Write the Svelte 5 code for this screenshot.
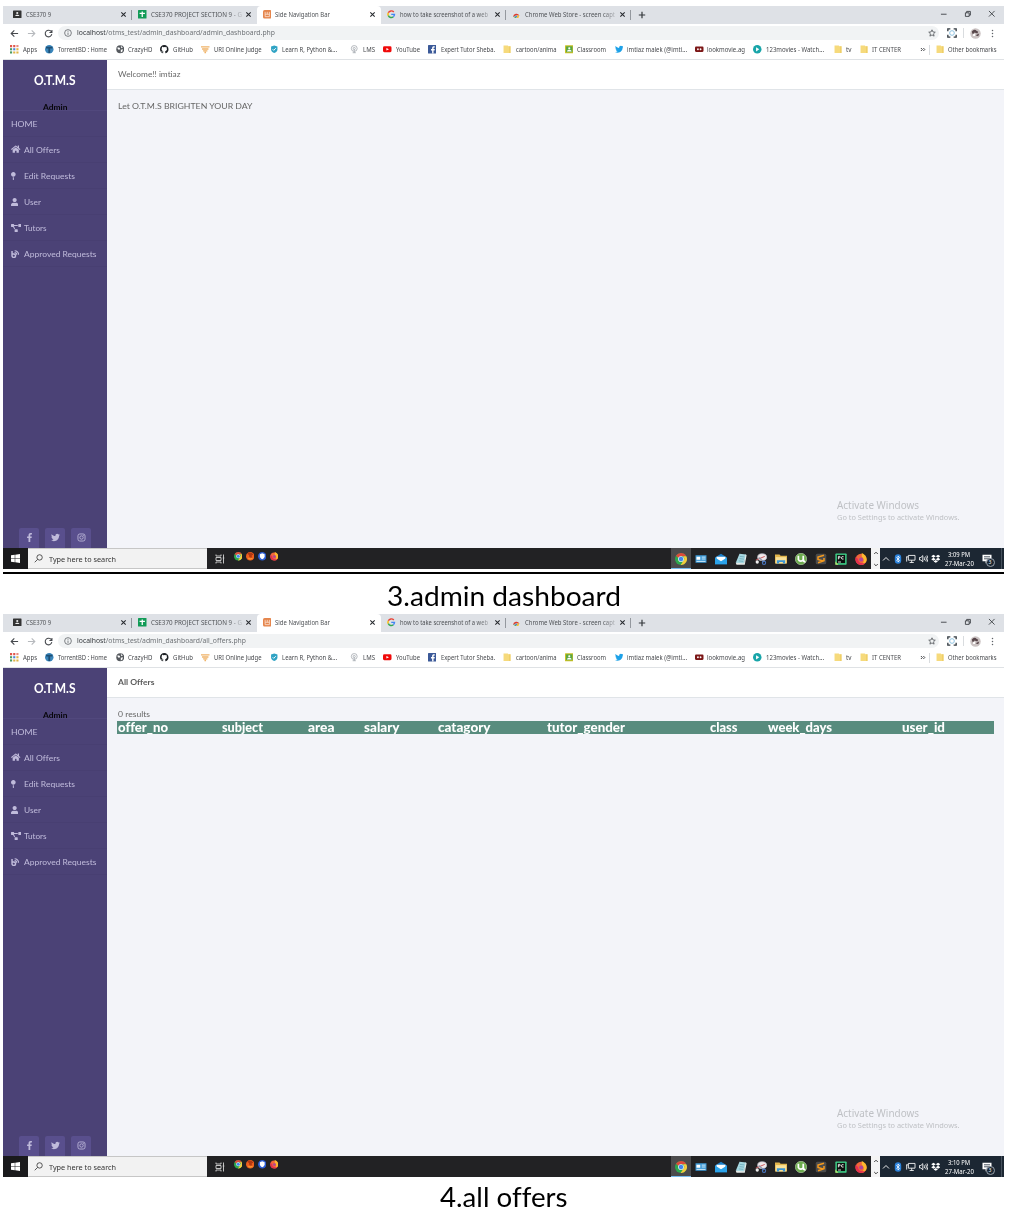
<script>
  // Scales a label horizontally so that it fills the given width.
  function fit(node, width) {
    const exact = node.getBoundingClientRect().width || width;
    node.style.transform = `scaleX(${width / exact})`;
  }

  const tabs = [
    { icon: 'gclass', label: 'CSE370 9', w: 129, pad: 10, tw: 25, sep: true },
    { icon: 'sheets', label: 'CSE370 PROJECT SECTION 9 - G', w: 125, pad: 6, tw: 91, fade: true },
    { icon: 'xampp', label: 'Side Navigation Bar', w: 124, pad: 5.5, tw: 55, active: true },
    { icon: 'google', label: 'how to take screenshot of a web', w: 125, pad: 6, tw: 88, fade: true, sep: true },
    { icon: 'store', label: 'Chrome Web Store - screen capt', w: 125, pad: 6, tw: 90, fade: true, sep: true }
  ];

  // icon, left edge, label left edge, label width, label
  const raw = [
    ['apps', 10, 23, 14, 'Apps'],
    ['torrent', 45, 58, 49, 'TorrentBD : Home'],
    ['globe', 115.5, 128, 24.5, 'CrazyHD'],
    ['github', 160, 173, 20, 'GitHub'],
    ['uri', 201, 214, 47.5, 'URI Online Judge'],
    ['shield', 270, 282, 55, 'Learn R, Python &...'],
    ['lms', 350, 363, 12, 'LMS'],
    ['youtube', 383, 396, 24, 'YouTube'],
    ['facebook', 427.5, 440.5, 54, 'Expert Tutor Sheba.'],
    ['folder', 503, 515.5, 40.5, 'cartoon/anima'],
    ['classroom', 564.5, 577, 29, 'Classroom'],
    ['twitter', 614.5, 627, 60, 'imtiaz malek (@imti...'],
    ['look', 695, 707, 38, 'lookmovie.ag'],
    ['play', 753, 766, 58, '123movies - Watch...'],
    ['folder', 834, 846, 5.5, 'tv'],
    ['folder', 860, 872, 29, 'IT CENTER']
  ];
  const bookmarks = raw.map(([icon, x, tx, tw, label], i) => ({
    icon, label, tw, iw: tx - x, w: (raw[i + 1] ? raw[i + 1][1] : 920) - x
  }));

  const menu = [
    { icon: '', label: 'HOME', w: 26.5 },
    { icon: 'home', label: 'All Offers', w: 36 },
    { icon: 'pin', label: 'Edit Requests', w: 51 },
    { icon: 'user', label: 'User', w: 17 },
    { icon: 'diagram', label: 'Tutors', w: 22.5 },
    { icon: 'blog', label: 'Approved Requests', w: 72.5 }
  ];

  const columns = [
    { label: 'offer_no', tw: 50, w: 104.5 },
    { label: 'subject', tw: 41, w: 86 },
    { label: 'area', tw: 26.5, w: 56 },
    { label: 'salary', tw: 35.5, w: 74 },
    { label: 'catagory', tw: 52.5, w: 109 },
    { label: 'tutor_gender', tw: 78, w: 162.5 },
    { label: 'class', tw: 27.5, w: 58 },
    { label: 'week_days', tw: 64, w: 134.5 },
    { label: 'user_id', tw: 43, w: 91 }
  ];

  const pinned = ['chrome', 'panel', 'mail', 'note', 'snip', 'explorer', 'utorrent', 'sublime', 'pycharm', 'firefox'];
  const twitterPath =
    'M459.37 151.716c.325 4.548.325 9.097.325 13.645 0 138.72-105.583 298.558-298.558 298.558-59.452 0-114.68-17.219-161.137-47.106 8.447.974 16.568 1.299 25.34 1.299 49.055 0 94.213-16.568 130.274-44.832-46.132-.975-84.792-31.188-98.112-72.772 6.498.974 12.995 1.624 19.818 1.624 9.421 0 18.843-1.3 27.614-3.573-48.081-9.747-84.143-51.98-84.143-102.985v-1.299c13.969 7.797 30.214 12.67 47.431 13.319-28.264-18.843-46.781-51.005-46.781-87.391 0-19.492 5.197-37.36 14.294-52.954 51.655 63.675 129.3 105.258 216.365 109.807-1.624-7.797-2.599-15.918-2.599-24.04 0-57.828 46.782-104.934 104.934-104.934 30.213 0 57.502 12.67 76.67 33.137 23.715-4.548 46.456-13.32 66.599-25.34-7.798 24.366-24.366 44.833-46.132 57.827 21.117-2.273 41.584-8.122 60.426-16.243-14.292 20.791-32.161 39.308-52.628 54.253z';
  const facebookPath =
    'M279.14 288l14.22-92.66h-88.91v-60.13c0-25.35 12.42-50.06 52.24-50.06h40.42V6.26S260.43 0 225.36 0c-73.22 0-121.08 44.38-121.08 124.72v70.62H22.89V288h81.39v224h100.17V288z';
</script>

{#snippet text(label, w, cls = '')}
  <span class="fit {cls}" style:width="{w}px"><span class="run" use:fit={w}>{label}</span></span>
{/snippet}

{#snippet icon(name, cls = '')}
  {#if name === 'home'}
    <svg class={cls} viewBox="0 0 576 512"><path fill="currentColor" d="M280.37 148.26L96 300.11V464a16 16 0 0 0 16 16l112.06-.29a16 16 0 0 0 15.92-16V368a16 16 0 0 1 16-16h64a16 16 0 0 1 16 16v95.64a16 16 0 0 0 16 16.05L464 480a16 16 0 0 0 16-16V300L295.67 148.26a12.19 12.19 0 0 0-15.3 0zM571.6 251.47L488 182.56V44.05a12 12 0 0 0-12-12h-56a12 12 0 0 0-12 12v72.61L318.47 43a48 48 0 0 0-61 0L4.34 251.47a12 12 0 0 0-1.6 16.9l25.5 31A12 12 0 0 0 45.15 301l235.22-193.74a12.19 12.19 0 0 1 15.3 0L530.9 301a12 12 0 0 0 16.9-1.6l25.5-31a12 12 0 0 0-1.7-16.93z" /></svg>
  {:else if name === 'pin'}
    <svg class={cls} viewBox="0 0 288 512"><path fill="currentColor" d="M112 316.94v156.69l22.02 33.02c4.75 7.12 15.22 7.12 19.97 0L176 473.63V316.94c-10.39 1.92-21.06 3.06-32 3.06s-21.61-1.14-32-3.06zM144 0C64.47 0 0 64.47 0 144s64.47 144 144 144 144-64.47 144-144S223.53 0 144 0z" /></svg>
  {:else if name === 'user'}
    <svg class={cls} viewBox="0 0 448 512"><path fill="currentColor" d="M224 256c70.7 0 128-57.3 128-128S294.7 0 224 0 96 57.3 96 128s57.3 128 128 128zm89.6 32h-16.7c-22.2 10.2-46.9 16-72.9 16s-50.6-5.8-72.9-16h-16.7C60.2 288 0 348.2 0 422.4V464c0 26.5 21.5 48 48 48h352c26.5 0 48-21.5 48-48v-41.6c0-74.2-60.2-134.4-134.4-134.4z" /></svg>
  {:else if name === 'diagram'}
    <svg class={cls} viewBox="0 0 640 512"><path fill="currentColor" d="M384 320H256c-17.67 0-32 14.33-32 32v128c0 17.67 14.33 32 32 32h128c17.67 0 32-14.33 32-32V352c0-17.67-14.33-32-32-32zM192 32c0-17.67-14.33-32-32-32H32C14.33 0 0 14.33 0 32v128c0 17.67 14.33 32 32 32h95.72l73.16 128.04C211.98 300.98 232.4 288 256 288h.28L192 175.51V128h224V64H192V32zM608 0H480c-17.67 0-32 14.33-32 32v128c0 17.67 14.33 32 32 32h128c17.67 0 32-14.33 32-32V32c0-17.67-14.33-32-32-32z" /></svg>
  {:else if name === 'blog'}
    <svg class={cls} viewBox="0 0 16 16" fill="none" stroke="currentColor"><path d="M2 2v9a3.400 3.400 0 1 0 3.400-3.400H3" stroke-width="2.800" /><path d="M7 1.500a7.600 7.600 0 0 1 7.600 7.600M7 5a4 4 0 0 1 4 4" stroke-width="2.200" /></svg>
  {:else if name === 'fb'}
    <svg class={cls} viewBox="0 0 320 512"><path fill="currentColor" d={facebookPath} /></svg>
  {:else if name === 'tw'}
    <svg class={cls} viewBox="0 0 512 512"><path fill="currentColor" d={twitterPath} /></svg>
  {:else if name === 'ig'}
    <svg class={cls} viewBox="0 0 16 16" fill="none" stroke="currentColor" stroke-width="1.5"><rect x="1.7" y="1.7" width="12.6" height="12.6" rx="3.4" /><circle cx="8" cy="8" r="3" /><circle cx="11.8" cy="4.2" r=".4" /></svg>
  {:else if name === 'gclass'}
    <svg class={cls} viewBox="0 0 16 16"><rect y="1" width="16" height="14" rx="1" fill="#333" /><circle cx="8" cy="5.7" r="2" fill="#eee" /><path d="M4 11.5c.5-3.5 7.500-3.500 8 0z" fill="#eee" /></svg>
  {:else if name === 'classroom'}
    <svg class={cls} viewBox="0 0 16 16"><rect y="0.500" width="16" height="15" rx="1" fill="#c9c026" /><rect x="2" y="2.500" width="12" height="11" fill="#5aa644" /><circle cx="8" cy="6" r="2" fill="#fff" /><path d="M3.500 12c.5-4 8.500-4 9 0z" fill="#fff" /></svg>
  {:else if name === 'sheets'}
    <svg class={cls} viewBox="0 0 16 16"><rect width="16" height="16" rx="1" fill="#129b57" /><path d="M8 3v10M3 6.500h10" stroke="#fff" stroke-width="2.400" /></svg>
  {:else if name === 'xampp'}
    <svg class={cls} viewBox="0 0 16 16"><rect width="16" height="16" rx="3" fill="#e5854c" /><path d="M4 3.500v9h8v-9M4 8h8M8 3.500V8" fill="none" stroke="#fbe3d4" stroke-width="1.500" /></svg>
  {:else if name === 'google'}
    <svg class={cls} viewBox="0 0 16 16" fill="none" stroke-width="2.700"><path d="M12.800 3.800A6.200 6.200 0 0 0 2.500 5.300" stroke="#ea4335" /><path d="M2.500 5.300a6 6 0 0 0 0 5.400" stroke="#fbbc05" /><path d="M2.500 10.700a6.200 6.200 0 0 0 9.500 2" stroke="#34a853" /><path d="M12 12.700c1.400-1.200 2.100-2.700 2.100-4.500H8" stroke="#4285f4" /></svg>
  {:else if name === 'store'}
    <svg class={cls} viewBox="0 0 16 16"><path d="M1 7h14v8H1z" fill="#e4e5e7" /><path d="M2 13a6.200 6.200 0 0 1 12-2L8 10z" fill="#dd3b2e" /><path d="M2 12.500l5 2.500 2-3z" fill="#2f9e58" /><path d="M9 10.500h5L12 15H8z" fill="#f3c03a" /><circle cx="8" cy="12" r="1.700" fill="#4b84d8" /></svg>
  {:else if name === 'apps'}
    <svg class={cls} viewBox="0 0 16 16"><path d="M0 0h4v4H0zM6 0h4v4H6z" fill="#e0554a" /><path d="M12 0h4v4h-4z" fill="#e88b80" /><path d="M0 6h4v4H0z" fill="#4c9b62" /><path d="M6 6h4v4H6z" fill="#4a83d8" /><path d="M12 6h4v4h-4z" fill="#e0b447" /><path d="M0 12h4v4H0z" fill="#4c9b62" /><path d="M6 12h4v4H6zM12 12h4v4h-4z" fill="#e0b447" /></svg>
  {:else if name === 'torrent'}
    <svg class={cls} viewBox="0 0 16 16"><circle cx="8" cy="8" r="8" fill="#3a86bb" /><path d="M2 5h12M8 5v10" stroke="#1d4f75" stroke-width="3.400" /></svg>
  {:else if name === 'globe'}
    <svg class={cls} viewBox="0 0 16 16"><circle cx="8" cy="8" r="7.500" fill="#55595e" /><path d="M3 4l4 1 1 3-3 1-2-2zM9 9l4-1-1 4-3 2zM9 2l4 2-3 2z" fill="#fff" /></svg>
  {:else if name === 'github'}
    <svg class={cls} viewBox="0 0 16 16"><path fill="#1b1f23" d="M8 0C3.580 0 0 3.580 0 8c0 3.540 2.290 6.530 5.470 7.590.4.07.55-.17.55-.38 0-.19-.01-.82-.01-1.490-2.010.37-2.530-.49-2.690-.94-.09-.23-.48-.94-.82-1.130-.28-.15-.68-.52-.01-.53.63-.01 1.080.58 1.230.82.72 1.210 1.870.87 2.330.66.07-.52.28-.87.51-1.070-1.780-.2-3.640-.89-3.640-3.950 0-.87.31-1.590.82-2.150-.08-.2-.36-1.020.08-2.120 0 0 .67-.21 2.200.82a7.640 7.640 0 0 1 4 0c1.530-1.040 2.200-.82 2.200-.82.44 1.100.16 1.920.08 2.120.51.56.82 1.270.82 2.150 0 3.070-1.870 3.750-3.650 3.950.29.25.54.73.54 1.480 0 1.070-.01 1.930-.01 2.200 0 .21.15.46.55.38A8 8 0 0 0 16 8c0-4.420-3.580-8-8-8z" /></svg>
  {:else if name === 'uri'}
    <svg class={cls} viewBox="0 0 16 16" fill="none" stroke="#efb368" stroke-width="2.600"><path d="M0 3.500h16M2 7.500h12M4 11h8M6.500 14h3" /></svg>
  {:else if name === 'shield'}
    <svg class={cls} viewBox="0 0 16 16"><path d="M8 1l6 2v5c0 4-3 6-6 7-3-1-6-3-6-7V3z" fill="#2fa3c4" /><path d="M5 8l2 2 4-4" fill="none" stroke="#fff" stroke-width="1.800" /></svg>
  {:else if name === 'lms'}
    <svg class={cls} viewBox="0 0 16 16" fill="none" stroke="#a9adb3" stroke-width="1.600"><circle cx="8" cy="6.500" r="5.500" /><circle cx="8" cy="6.500" r="2" /><path d="M8 8v7M5 14.500h6" /></svg>
  {:else if name === 'youtube'}
    <svg class={cls} viewBox="0 0 16 16"><rect y="2.500" width="16" height="11" rx="2.500" fill="#f00a0a" /><path d="M6.300 5.500l5 2.500-5 2.500z" fill="#fff" /></svg>
  {:else if name === 'facebook'}
    <svg class={cls} viewBox="0 0 16 16"><rect width="16" height="16" rx="1" fill="#3b5998" /><path transform="translate(5 2.500) scale(.0265)" d={facebookPath} fill="#fff" /></svg>
  {:else if name === 'folder'}
    <svg class={cls} viewBox="0 0 16 16"><path d="M1 1h8l1.500 1.500H14V15H1z" fill="#f6da7c" /><path d="M12 2.500h2V15h-2z" fill="#eac95e" /></svg>
  {:else if name === 'twitter'}
    <svg class={cls} viewBox="0 0 512 512"><path fill="#1da1e8" d={twitterPath} /></svg>
  {:else if name === 'look'}
    <svg class={cls} viewBox="0 0 16 16"><rect y="3" width="16" height="10" rx="2" fill="#7c1717" /><circle cx="5.500" cy="8" r="1.700" fill="#fff" /><circle cx="10.500" cy="8" r="1.700" fill="#fff" /></svg>
  {:else if name === 'play'}
    <svg class={cls} viewBox="0 0 16 16"><circle cx="8" cy="8" r="8" fill="#18a5a9" /><path d="M5.800 4l6 4-6 4z" fill="#fff" /></svg>
  {:else if name === 'chrome'}
    <svg class={cls} viewBox="0 0 16 16"><circle cx="8" cy="8" r="8" fill="#2da94f" /><path d="M8 0a8 8 0 0 1 7 4.200H8a4 4 0 0 0-3.600 2.300L1.300 3.600A8 8 0 0 1 8 0z" fill="#e0493b" /><path d="M15 4.200A8 8 0 0 1 7.500 16l3.800-5.800A4 4 0 0 0 10.600 4.200z" fill="#f7cb3d" /><circle cx="8" cy="8" r="3.800" fill="#fff" /><circle cx="8" cy="8" r="3" fill="#4486ee" /></svg>
  {:else if name === 'panel'}
    <svg class={cls} viewBox="0 0 16 16"><rect x=".7" y="3" width="14.600" height="10" fill="#3d9ad8" /><path d="M2 5h5v4H2z" fill="#fff" /><path d="M9 5.500h5M9 8h5M2 11.200h12" stroke="#dff1fb" stroke-width="1.200" /></svg>
  {:else if name === 'mail'}
    <svg class={cls} viewBox="0 0 16 16"><path d="M0 6l8-5 8 5v9H0z" fill="#1b7fc9" /><path d="M2 5h12v5l-6 3-6-3z" fill="#fff" /><path d="M0 6l8 5 8-5v9H0z" fill="#2ba3ea" /></svg>
  {:else if name === 'note'}
    <svg class={cls} viewBox="0 0 16 16"><path d="M6 1l9 1-3 12.500L1 13z" fill="#a6d7e0" /><path d="M14 2l1.500 1-2.500 12.500H2L1 13l11 .5z" fill="#e6ebe9" /><path d="M6.500 4.500l6 .7M6 7.500l6 .7M5 10.500l6 .7" stroke="#6aa8b7" /></svg>
  {:else if name === 'snip'}
    <svg class={cls} viewBox="0 0 16 16"><ellipse cx="9.500" cy="5.500" rx="6" ry="4.500" fill="#f1e9ea" stroke="#bcbfc9" /><path d="M1 9.500l12-5" stroke="#c9585c" stroke-width="1.300" /><path d="M5 6l7 6" stroke="#8a96ad" stroke-width="1.400" /><circle cx="3" cy="12" r="2.200" fill="#eee" /><circle cx="12" cy="13" r="2.200" fill="none" stroke="#4977c2" stroke-width="1.400" /></svg>
  {:else if name === 'explorer'}
    <svg class={cls} viewBox="0 0 16 16"><path d="M0 2h6l1.500 1.500H16V14H0z" fill="#e3b64c" /><path d="M1 5.500h14V14H1z" fill="#fae29a" /><path d="M2.500 9.500h11V14h-3v-2h-5v2h-3z" fill="#3d96d4" /></svg>
  {:else if name === 'utorrent'}
    <svg class={cls} viewBox="0 0 16 16"><circle cx="8" cy="8" r="7.600" fill="#6cab4d" stroke="#bcd9ac" stroke-width=".8" /><path d="M4.500 3.500v5.200a3.500 3.500 0 0 0 6.500 0V3.500M11 8c0 3 1 4 3 4" fill="none" stroke="#fff" stroke-width="2.300" /></svg>
  {:else if name === 'sublime'}
    <svg class={cls} viewBox="0 0 16 16"><rect x="1" y="1" width="14" height="14" rx="2" fill="#4b4b4b" /><path d="M12 3L4 5.500v3L12 11M12 6.500v3.800L4 13" fill="none" stroke="#f79a1c" stroke-width="2" /></svg>
  {:else if name === 'pycharm'}
    <svg class={cls} viewBox="0 0 16 16"><rect x=".5" y=".5" width="15" height="15" rx="1" fill="#3fce87" /><path d="M.5 11l4 4.500h-4z" fill="#b9e46a" /><rect x="2.500" y="2.500" width="11" height="11" fill="#0c0f0d" /><path d="M4.500 8.500v-4h2q1 1 0 2h-2M11.500 5q-3-1-3 1.500t3 1.500M4 12h4" fill="none" stroke="#fff" stroke-width="1.100" /></svg>
  {:else if name === 'firefox'}
    <svg class={cls} viewBox="0 0 16 16"><circle cx="8" cy="8.500" r="7.400" fill="#f2663b" /><path d="M9 0c4 2 7 5 6.600 9.500C15 13 12 15 9 15.500 13 12 12 7 9 5z" fill="#fdb82e" /><path d="M1 5c-2 6 2 11 7 11 3 0 5-1 6-3-5 2-10 0-10-5z" fill="#e5304f" /><circle cx="8.200" cy="8.700" r="2.700" fill="#b0479a" /></svg>
  {:else if name === 'duck'}
    <svg class={cls} viewBox="0 0 16 16"><circle cx="8" cy="8" r="8" fill="#ee5f1d" /><path d="M2 3c5-4 11-1 12 3-4-1-4 2-2 4-5 2-7-2-6-4z" fill="#b23812" /><path d="M3 10c3 3 7 3 10 1-1 4-8 5-10-1z" fill="#fbab35" /></svg>
  {:else if name === 'guard'}
    <svg class={cls} viewBox="0 0 16 16"><circle cx="8" cy="8" r="8" fill="#2a5cd3" /><path d="M8 2.500l4.500 1.500v4c0 3-2 4.500-4.500 5.500-2.500-1-4.500-2.500-4.500-5.500V4z" fill="#fff" /></svg>
  {/if}
{/snippet}

{#snippet browser(url, urlWidth)}
  <div class="tabs">
    {#each tabs as t}
      <div class="tab" class:active={t.active} style:width="{t.w}px" style:padding-left="{t.pad}px">
        {@render icon(t.icon, 'fav')}
        <span class="title" class:fade={t.fade}>{@render text(t.label, t.tw)}</span>
        <svg class="close" viewBox="0 0 8 8"><path d="M1.500 1.500l5 5M6.500 1.500l-5 5" /></svg>
        <i class="divider" class:shown={t.sep}></i>
      </div>
    {/each}
    <svg class="plus" viewBox="0 0 8 8"><path d="M4 .8v6.400M.8 4h6.400" /></svg>
    <div class="window">
      <svg viewBox="0 0 8 8"><path d="M1 4.500h6" /></svg>
      <svg viewBox="0 0 8 8"><path d="M1.500 3h4v3.800h-4zM2.800 3V1.500h4v4H5.500" /></svg>
      <svg viewBox="0 0 8 8"><path d="M1 1l6 6M7 1L1 7" /></svg>
    </div>
  </div>
  <div class="address">
    <svg class="nav" viewBox="0 0 10 10"><path d="M9 5H1.500M4.800 1.500L1.300 5l3.500 3.500" /></svg>
    <svg class="nav off" viewBox="0 0 10 10"><path d="M1 5h7.500M5.200 1.500L8.700 5 5.200 8.500" /></svg>
    <svg class="nav" viewBox="0 0 10 10"><path d="M8.200 3A3.700 3.700 0 1 0 8.700 5.800M8.800 1v2.800H6" /></svg>
    <div class="omnibox">
      <svg class="info" viewBox="0 0 10 10"><circle cx="5" cy="5" r="4.200" /><path d="M5 4.400v3M5 2.400v1" /></svg>
      <span class="fit url" style:width="{urlWidth}px"><span class="run" use:fit={urlWidth}><b>localhost</b>{url}</span></span>
      <svg class="star" viewBox="0 0 10 10"><path d="M5 1l1.200 2.700 2.900.3-2.200 2 .7 2.900L5 7.400 2.400 8.900l.7-2.900L.9 4l2.900-.3z" /></svg>
    </div>
    <svg class="capture" viewBox="0 0 12 12"><path d="M1 4V1h3M8 1h3v3M11 8v3H8M4 11H1V8" stroke="#333b42" stroke-width="1.600" /><circle cx="6" cy="6" r="2.800" stroke="#8fc3e2" stroke-width="1.200" /></svg>
    <i class="bar"></i>
    <svg class="avatar" viewBox="0 0 12 12"><circle cx="6" cy="6" r="5.700" fill="#ccc4c4" /><path d="M2 4c1-2 4-3 5-1l2 1-1 2-3-1-2 2zM6 8l4-2-1 3z" fill="#57464a" /><circle cx="4.500" cy="7.500" r="1.300" fill="#fff" /></svg>
    <svg class="dots" viewBox="0 0 4 12"><circle cx="2" cy="2" r="1" /><circle cx="2" cy="6" r="1" /><circle cx="2" cy="10" r="1" /></svg>
  </div>
  <div class="bookmarks">
    {#each bookmarks as b}
      <div class="bookmark" style:width="{b.w}px">
        <span class="slot" style:width="{b.iw}px">{@render icon(b.icon, 'fav')}</span>
        {@render text(b.label, b.tw)}
      </div>
    {/each}
    <svg class="more" viewBox="0 0 10 8"><path d="M1.500 1.500L4 4 1.500 6.500M5.500 1.500L8 4 5.500 6.500" /></svg>
    <i class="bar"></i>
    <span class="slot last">{@render icon('folder', 'fav')}</span>
    {@render text('Other bookmarks', 48.5)}
  </div>
{/snippet}

{#snippet sidebar()}
  <aside>
    <h2>{@render text('O.T.M.S', 41.5)}</h2>
    <p class="role">{@render text('Admin', 24.5)}</p>
    <ul>
      {#each menu as m}
        <li>
          {#if m.icon}<span class="glyph">{@render icon(m.icon, 'mi ' + m.icon)}</span>{/if}
          {@render text(m.label, m.w)}
        </li>
      {/each}
    </ul>
    <div class="social">
      {#each ['fb', 'tw', 'ig'] as s}
        <span>{@render icon(s, 'si')}</span>
      {/each}
    </div>
  </aside>
{/snippet}

{#snippet watermark()}
  <div class="watermark">
    {@render text('Activate Windows', 82, 'big')}
    {@render text('Go to Settings to activate Windows.', 122.5, 'small')}
  </div>
{/snippet}

{#snippet taskbar(time, tw)}
  <footer>
    <div class="start"><svg viewBox="0 0 18 18"><path fill="#fff" d="M0 2.500l7.500-1v7H0zM8.500 1.300L18 0v8.500H8.500zM0 9.500h7.500v7l-7.500-1zM8.500 9.500H18V18l-9.500-1.300z" /></svg></div>
    <div class="search">
      <svg viewBox="0 0 10 10"><circle cx="6.200" cy="3.800" r="3" /><path d="M4 6L.8 9.200" /></svg>
      {@render text('Type here to search', 67)}
    </div>
    <svg class="view" viewBox="0 0 10 10"><path d="M1 .5V2h5V.5M1 9.500V8h5v1.500M1 3.500h5v3H1zM8.500 .5v9M7.700 4h1.600" /></svg>
    <div class="running">
      {#each ['chrome', 'duck', 'guard', 'firefox'] as p}{@render icon(p, 'tiny')}{/each}
    </div>
    <div class="pinned">
      {#each pinned as p, i}<span class:on={i === 0}>{@render icon(p, 'app')}</span>{/each}
    </div>
    <div class="scroll">
      <svg viewBox="0 0 6 4"><path d="M1.200 3L3 1.200 4.800 3" /></svg>
      <svg viewBox="0 0 6 4"><path d="M1.200 1L3 2.800 4.800 1" /></svg>
    </div>
    <div class="tray">
      <svg class="up" viewBox="0 0 8 8"><path d="M1 5.500l3-3 3 3" /></svg>
      <svg class="bt" viewBox="0 0 8 10"><rect x=".8" y=".3" width="6.400" height="9.400" rx="3.200" fill="#2c83dc" stroke="none" /><path d="M2.400 3.300l3.200 3.200L4 8V2l1.600 1.500-3.200 3.200" stroke-width=".8" /></svg>
      <svg class="net" viewBox="0 0 10 10"><path d="M2.500 1.500h7v5h-7zM6 6.500V9M3.800 9h4.400M.7 3v5M.2 3h2" /></svg>
      <svg class="vol" viewBox="0 0 10 10"><path d="M.5 3.700H2l2-2v6.600l-2-2H.5zM5.500 3.500q1 1.500 0 3M7 2.500q1.800 2.500 0 5M8.400 1.500q2.400 3.500 0 7" /></svg>
      <svg class="drop" viewBox="0 0 10 10"><path fill="#fff" stroke="none" d="M2.600 .8L5 2.400 2.600 4 .2 2.400zM7.400 .8l2.400 1.600L7.400 4 5 2.400zM2.600 4L5 5.600 2.600 7.200.2 5.600zM7.400 4l2.400 1.600-2.400 1.600L5 5.600zM5 6.300l2.300 1.500L5 9.300 2.700 7.800z" /></svg>
      <div class="clock">
        {@render text(time, tw)}
        {@render text('27-Mar-20', 29)}
      </div>
      <div class="center">
        <svg viewBox="0 0 10 10"><path fill="#fff" stroke="none" d="M.5 .8h9v6.400H6L3.600 9.500V7.200H.5z" /><path d="M2 2.800h6M2 4.800h6" stroke="#1d2b3a" stroke-width=".8" /></svg>
        <span class="badge">3</span>
      </div>
      <i class="edge"></i>
    </div>
  </footer>
{/snippet}

<main>
  <section class="shot first">
    {@render browser('/otms_test/admin_dashboard/admin_dashboard.php', 198)}
    <div class="page">
      {@render sidebar()}
      <div class="content">
        <header>{@render text('Welcome!! imtiaz', 62.5)}</header>
        <p class="line">{@render text('Let O.T.M.S BRIGHTEN YOUR DAY', 134.5)}</p>
      </div>
      {@render watermark()}
    </div>
    {@render taskbar('3:09 PM', 22)}
  </section>
  <h1 class="cap-one">{@render text('3.admin dashboard', 234)}</h1>

  <section class="shot">
    {@render browser('/otms_test/admin_dashboard/all_offers.php', 169)}
    <div class="page">
      {@render sidebar()}
      <div class="content">
        <header class="strong">{@render text('All Offers', 36.5)}</header>
        <p class="line">{@render text('0 results', 32)}</p>
        <div class="heads">
          {#each columns as c}
            <div style:width="{c.w}px">{@render text(c.label, c.tw)}</div>
          {/each}
        </div>
      </div>
      {@render watermark()}
    </div>
    {@render taskbar('3:10 PM', 22)}
  </section>
  <h1 class="cap-two">{@render text('4.all offers', 127.5)}</h1>
</main>

<style>
  :global(body) { background: #fff; }
  main {
    box-sizing: border-box; width: 1010px; height: 1224px; padding: 6px 6px 0 3px;
    overflow: hidden; font-family: 'Noto Sans', sans-serif; color: #4f5256; font-variant-ligatures: none;
  }
  h1, h2, p, ul { margin: 0; padding: 0; list-style: none; font-weight: 400; }
  svg { display: block; flex: none; }
  .fit { display: block; flex: none; white-space: nowrap; }
  .run { display: inline-block; transform-origin: 0 50%; }
  .shot { width: 1001px; height: 563px; }
  .first { padding-bottom: 3px; border-bottom: 2px solid #000; }

  .tabs { display: flex; height: 18px; background: #dee1e6; font-size: 6.500px; line-height: 9px; }
  .tab { box-sizing: border-box; display: flex; align-items: center; padding-bottom: 1px; }
  .tab.active { background: #fff; border-radius: 4px 4px 0 0; }
  .divider { width: 1px; height: 10px; margin-left: 4px; }
  .divider.shown { background: #94989e; }
  .fav { width: 8.500px; height: 8.500px; }
  .title { flex: 1; margin-left: 4px; overflow: hidden; }
  .fade { mask-image: linear-gradient(90deg, #000 78px, transparent 94px); }
  .close { width: 7px; height: 7px; stroke: #26292d; stroke-width: 1.200; fill: none; }
  .plus { width: 8px; height: 8px; margin: 4.500px 0 0 7px; stroke: #33373b; stroke-width: 1.200; }
  .window { display: flex; gap: 16.500px; margin: 3.500px 8.500px 0 auto; }
  .window svg { width: 7.500px; height: 7.500px; fill: none; stroke: #33373b; stroke-width: .9; }

  .address { display: flex; align-items: center; height: 18px; padding-left: 7px; }
  .nav { width: 9px; height: 9px; margin-right: 8px; fill: none; stroke: #45484d; stroke-width: 1.200; }
  .nav.off { stroke: #b6b9bd; }
  .omnibox {
    box-sizing: border-box; display: flex; align-items: center; width: 881px; height: 14.500px; margin-left: -3px;
    padding: 0 4px 0 6px; border-radius: 8px; background: #f1f3f4;
  }
  .info { width: 8px; height: 8px; margin-right: 4.500px; fill: none; stroke: #5f6368; }
  .url { font-size: 6.900px; line-height: 10px; color: #6f7377; }
  .url b { font-weight: 400; color: #33373b; }
  .star { width: 8px; height: 8px; margin: 0 0 0 auto; fill: none; stroke: #505459; transform: translateX(1px); }
  .capture { width: 10px; height: 10px; margin-left: 7.500px; fill: none; }
  .bar { width: 1px; height: 10px; background: #d9dcdf; }
  .address .bar { margin-left: 6px; }
  .avatar { width: 11px; height: 11px; margin-left: 6px; }
  .dots { width: 3px; height: 9px; margin-left: 10px; fill: #5f6368; }

  .bookmarks {
    box-sizing: border-box; display: flex; align-items: center; height: 18px; padding: 0 0 2px 7px;
    border-bottom: 1px solid #dfe2e5; font-size: 6.500px; line-height: 9px; color: #47494d;
  }
  .bookmark { display: flex; align-items: center; flex: none; }
  .slot { flex: none; }
  .more { width: 6px; height: 5px; fill: none; stroke: #33363a; stroke-width: 1.500; }
  .bookmarks .bar { margin: 0 6px 0 3px; }
  .last { width: 12px; }

  .page { position: relative; display: flex; height: 488px; background: #f3f4f9; font-family: Lato, sans-serif; }
  aside { display: flex; flex-direction: column; width: 104px; background: #4b4276; color: #c0bbdb; }
  h2 { display: flex; justify-content: center; margin-top: 12px; font-size: 12.300px; line-height: 17px; font-weight: 700; color: #fff; }
  .role { display: flex; justify-content: center; margin-top: 12px; font-size: 7.800px; line-height: 12px; font-weight: 700; color: #08070c; }
  ul { border-top: 1px solid #51487d; margin-top: -3px; }
  li {
    box-sizing: border-box; display: flex; align-items: center; height: 26.080px; padding-left: 8px;
    font-size: 7.900px; line-height: 12px; border-bottom: 1px solid #483f72;
  }
  .glyph { width: 13px; flex: none; }
  .mi { height: 8.300px; }
  .home { width: 9.500px; }
  .pin { width: 4.700px; }
  .user { width: 7.300px; }
  .diagram { width: 10.400px; }
  .blog { width: 8.300px; }
  .social { display: flex; gap: 6px; margin-top: auto; padding-left: 16px; }
  .social span {
    display: flex; align-items: center; justify-content: center; width: 20px; height: 20.500px;
    background: #594f8d; border-radius: 2px 2px 0 0;
  }
  .si { width: 9px; height: 9px; }
  .content { flex: 1; padding-right: 10px; font-size: 8px; line-height: 12px; color: #666; }
  header { height: 29px; padding: 0 0 0 11px; margin-right: -10px; background: #fff; border-bottom: 1px solid #e0e4e8; line-height: 28px; }
  .strong { font-weight: 700; color: #5c5c5c; }
  .line { margin: 9.500px 0 0 11px; }
  .heads {
    display: flex; align-items: center; height: 13px; margin: 1.500px 0 0 10px; padding-left: .5px;
    background: #588c7e; color: #fff; font-size: 12.300px; line-height: 12px; font-weight: 900;
  }
  .watermark { position: absolute; left: 834px; top: 438px; font-family: 'Noto Sans', sans-serif; color: #bfc1c5; }
  .big { font-size: 10.300px; line-height: 14px; }
  .small { font-size: 7.500px; line-height: 11px; }

  footer { display: flex; height: 21px; background: #222224; }
  .start { display: flex; align-items: center; justify-content: center; width: 25px; background: #1a1a1c; }
  .start svg { width: 9px; height: 9px; }
  .search {
    box-sizing: border-box; display: flex; align-items: center; width: 179px; padding-left: 6px; gap: 5.500px;
    background: #f2f2f2; border: solid #c6c6c6; border-width: 1px 0; font-size: 7.800px; line-height: 12px; color: #333;
  }
  .search svg { width: 9px; height: 9px; fill: none; stroke: #333; stroke-width: .9; }
  .view { width: 10px; height: 10px; margin: 5.500px 0 0 8px; fill: none; stroke: #d5d5d5; stroke-width: .9; }
  .running { display: flex; gap: 3.500px; margin: 4px 0 0 8.500px; }
  .tiny { width: 8.500px; height: 8.500px; }
  .pinned { display: flex; margin-left: auto; }
  .pinned span { box-sizing: border-box; display: flex; align-items: center; justify-content: center; width: 20px; }
  .pinned .on { background: #4b4b4d; box-shadow: inset 0 -1px #76b9ed; }
  .app { width: 12px; height: 12px; }
  .scroll { display: flex; flex-direction: column; justify-content: space-between; align-items: center; box-sizing: border-box; width: 9px; padding: 2.500px 0; background: #f4f4f4; }
  .scroll svg { width: 6px; height: 4px; fill: none; stroke: #444; }
  .tray { display: flex; align-items: center; width: 124px; background: #1c2733; color: #fff; }
  .tray svg { fill: none; stroke: #fff; stroke-width: .9; }
  .up { width: 8px; height: 8px; margin-left: 2px; }
  .bt { width: 8px; height: 10px; margin-left: 4px; }
  .net { width: 9.500px; height: 9.500px; margin-left: 4px; }
  .vol { width: 9.500px; height: 9.500px; margin-left: 3px; }
  .drop { width: 9.500px; height: 9.500px; margin-left: 2.500px; }
  .clock { display: flex; flex-direction: column; align-items: center; margin-left: 4.500px; font-size: 6.600px; line-height: 9px; }
  .center { position: relative; margin-left: 8px; }
  .center svg { width: 10px; height: 10px; }
  .badge {
    position: absolute; left: 4px; top: 4px; width: 7px; height: 7px; border: .5px solid #9aa3ad; border-radius: 50%;
    background: #1c2733; font-size: 5px; line-height: 7px; text-align: center;
  }
  .edge { width: 1px; height: 21px; margin: 0 2px 0 auto; background: #46515d; }

  h1 { display: flex; justify-content: center; font-family: Lato, sans-serif; color: #000; font-size: 27px; }
  .cap-one { height: 40px; line-height: 44px; }
  .cap-two { height: 44px; line-height: 40px; }
</style>
